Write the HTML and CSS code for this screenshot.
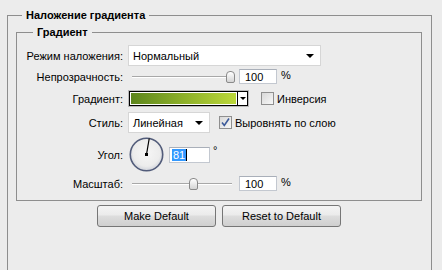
FILE: index.html
```html
<!DOCTYPE html>
<html lang="ru">
<head>
    <meta charset="UTF-8">
    <title>Наложение градиента</title>
    <link rel="stylesheet" href="styles.css">
</head>
<body>

    <!-- Gradient Overlay panel -->
    <fieldset class="group outer">
        <legend>Наложение градиента</legend>

        <fieldset class="group inner">
            <legend>Градиент</legend>

            <div class="row r-mode">
                <span class="lbl">Режим наложения:</span>
                <div class="select mode"><span>Нормальный</span><i class="arrow"></i></div>
            </div>

            <div class="row r-opacity">
                <span class="lbl">Непрозрачность:</span>
                <div class="slider"><div class="track"></div><div class="thumb" style="left: 98px"></div></div>
                <div class="field num">100</div>
                <span class="unit">%</span>
            </div>

            <div class="row r-grad">
                <span class="lbl">Градиент:</span>
                <div class="grad-box">
                    <div class="grad-fill"></div>
                    <div class="grad-drop"><i class="arrow"></i></div>
                </div>
                <label class="check inv"><span class="box"></span>Инверсия</label>
            </div>

            <div class="row r-style">
                <span class="lbl">Стиль:</span>
                <div class="select style"><span>Линейная</span><i class="arrow"></i></div>
                <label class="check align">
                    <span class="box on">
                        <svg width="11" height="11" viewBox="0 0 11 11"><path d="M2 5.5 L4.3 8.5 L9 1.5" fill="none" stroke="#3c5a9a" stroke-width="1.6"/></svg>
                    </span>Выровнять по слою
                </label>
            </div>

            <div class="row r-angle">
                <span class="lbl">Угол:</span>
                <svg class="dial" width="35" height="35" viewBox="0 0 35 35">
                    <defs>
                        <radialGradient id="dialBg" cx="50%" cy="45%" r="55%">
                            <stop offset="0" stop-color="#f6f6f6"/>
                            <stop offset="0.75" stop-color="#ececec"/>
                            <stop offset="1" stop-color="#cfd2da"/>
                        </radialGradient>
                    </defs>
                    <circle cx="17.5" cy="17.5" r="16.2" fill="url(#dialBg)" stroke="#525c7a" stroke-width="1.6"/>
                    <line x1="17.5" y1="17.5" x2="20.2" y2="1.5" stroke="#000" stroke-width="1.2"/>
                    <rect x="16" y="16" width="3" height="3" fill="#000"/>
                </svg>
                <div class="field angle"><span class="sel">81</span><span class="caret"></span></div>
                <span class="unit deg">°</span>
            </div>

            <div class="row r-scale">
                <span class="lbl">Масштаб:</span>
                <div class="slider"><div class="track"></div><div class="thumb" style="left: 61px"></div></div>
                <div class="field num">100</div>
                <span class="unit">%</span>
            </div>
        </fieldset>

        <div class="buttons">
            <button class="btn">Make Default</button>
            <button class="btn">Reset to Default</button>
        </div>
    </fieldset>

</body>
</html>
```

FILE: styles.css
```css
body {
    margin: 0;
    background: #ececec;
    font-family: "Liberation Sans", Arial, sans-serif;
    font-size: 11px;
    color: #000;
    overflow: hidden;
    height: 270px;
}

/* Group boxes */
.group {
    border: 1px solid #8e8e8e;
    margin: 0;
    box-sizing: border-box;
}

.group legend {
    font-weight: bold;
    line-height: 14px;
    padding: 0 4px;
}

/* outer box runs off the bottom of the dialog */
.outer {
    margin: 8px 0 0 7px;
    width: 425px;
    height: 262px;
    border-bottom: none;
    padding: 3px 9px 0 8px;
}

.outer > legend {
    margin-left: 6px;
}

.inner {
    width: 406px;
    padding: 6px 0 9px 0;
}

.inner > legend {
    margin-left: 16px;
}

/* Rows */
.row {
    display: flex;
    align-items: center;
}

.lbl {
    width: 106px;
    margin-right: 5px;
    text-align: right;
    white-space: nowrap;
}

.r-mode { height: 21px; }
.r-opacity { height: 15px; margin-top: 3px; }
.r-grad { height: 17px; margin-top: 6px; }
.r-style { height: 21px; margin-top: 5px; }
.r-angle { height: 35px; margin-top: 4px; }
.r-scale { height: 15px; margin-top: 4px; }

/* Select boxes */
.select {
    position: relative;
    height: 21px;
    box-sizing: border-box;
    background: #fff;
    border: 1px solid #d6d6d6;
    display: flex;
    align-items: center;
    padding-left: 4px;
}

.select.mode { width: 193px; }
.select.style { width: 82px; }

.arrow {
    display: block;
    width: 0;
    height: 0;
    border-left: 4px solid transparent;
    border-right: 4px solid transparent;
    border-top: 4px solid #000;
}

.select .arrow {
    position: absolute;
    right: 6px;
    top: 8px;
}

/* Sliders */
.slider {
    position: relative;
    width: 108px;
    height: 15px;
    margin-right: 3px;
}

.track {
    position: absolute;
    left: 4px;
    right: 4px;
    top: 7px;
    height: 1px;
    background: #a8a8a8;
    border-bottom: 1px solid #fff;
}

.thumb {
    position: absolute;
    top: 2px;
    width: 7px;
    height: 10px;
    border: 1px solid #8a8a8a;
    border-radius: 4px 4px 2px 2px;
    background: linear-gradient(#ffffff, #d4d4d4);
}

/* Text fields */
.field {
    height: 15px;
    box-sizing: border-box;
    background: #fff;
    border: 1px solid #c3c8d0;
    border-top-color: #a9afb9;
    display: flex;
    align-items: center;
}

.field.num {
    width: 38px;
    padding-left: 5px;
}

.field.angle {
    width: 41px;
    height: 16px;
    margin-left: 5px;
    padding-left: 2px;
}

.sel {
    background: #3399ff;
    color: #fff;
    padding: 0 1px;
    line-height: 12px;
}

.caret {
    width: 1px;
    height: 12px;
    background: #000;
}

.unit {
    margin-left: 4px;
    align-self: flex-start;
    line-height: 12px;
}

.deg {
    margin-left: 3px;
    margin-top: 7px;
}

/* Gradient swatch */
.grad-box {
    display: flex;
    width: 121px;
    height: 17px;
    box-sizing: border-box;
    border: 1px solid #b9b9b9;
}

.grad-fill {
    flex: 1;
    border: 1px solid #000;
    box-shadow: inset 0 0 0 1px #fff;
    background: linear-gradient(to right, #5c851c, #8db02a 50%, #bcd83a);
}

.grad-drop {
    width: 9px;
    border: 1px solid #000;
    border-left: none;
    background: #fff;
    display: flex;
    align-items: center;
    justify-content: center;
}

.grad-drop .arrow {
    border-left-width: 3px;
    border-right-width: 3px;
    border-top-width: 3px;
}

/* Checkboxes */
.check {
    display: flex;
    align-items: center;
    white-space: nowrap;
}

.check .box {
    width: 11px;
    height: 11px;
    border: 1px solid #8f8f8f;
    background: linear-gradient(135deg, #d8d8d8, #f8f8f8);
    margin-right: 3px;
    display: flex;
}

.check.inv { margin-left: 12px; }
.check.align { margin-left: 9px; }

/* Angle dial */
.dial {
    margin-left: 1px;
}

/* Buttons */
.buttons {
    display: flex;
    justify-content: center;
    gap: 6px;
    margin-top: 4px;
}

.btn {
    width: 119px;
    height: 22px;
    font-family: inherit;
    font-size: 11px;
    color: #000;
    border: 1px solid #767676;
    border-radius: 3px;
    background: linear-gradient(#f4f4f4, #ebebeb 45%, #dddddd 50%, #cfcfcf);
    padding: 0;
}
```
